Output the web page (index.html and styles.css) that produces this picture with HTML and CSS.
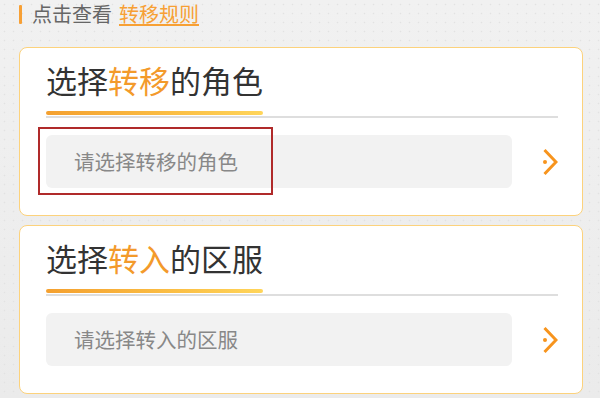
FILE: index.html
```html
<!DOCTYPE html>
<html lang="zh-CN">
<head>
<meta charset="utf-8">
<title>转移</title>
<link rel="stylesheet" href="styles.css">
</head>
<body>
<div class="page">
  <div class="notice">
    <span class="notice-bar"></span>
    <span class="notice-text">点击查看</span>
    <a class="notice-link" href="#">转移规则</a>
  </div>

  <section class="card">
    <div class="card-head">
      <h2 class="card-title">选择<span class="hl">转移</span>的角色</h2>
      <div class="card-bar"></div>
    </div>
    <div class="select-row">
      <div class="select-box">
        <span class="placeholder">请选择转移的角色</span>
        <span class="annot"></span>
      </div>
      <svg class="chev" viewBox="0 0 16 28" width="16" height="28" aria-hidden="true">
        <polyline points="2.5,2 14,14 2.5,26" fill="none" stroke="#f7941d" stroke-width="3" stroke-linejoin="miter"/>
        <circle cx="3" cy="14" r="2" fill="#f7941d"/>
      </svg>
    </div>
  </section>

  <section class="card">
    <div class="card-head">
      <h2 class="card-title">选择<span class="hl">转入</span>的区服</h2>
      <div class="card-bar"></div>
    </div>
    <div class="select-row">
      <div class="select-box">
        <span class="placeholder">请选择转入的区服</span>
      </div>
      <svg class="chev" viewBox="0 0 16 28" width="16" height="28" aria-hidden="true">
        <polyline points="2.5,2 14,14 2.5,26" fill="none" stroke="#f7941d" stroke-width="3" stroke-linejoin="miter"/>
        <circle cx="3" cy="14" r="2" fill="#f7941d"/>
      </svg>
    </div>
  </section>
</div>
</body>
</html>
```

FILE: styles.css
```css
* { box-sizing: border-box; }
html, body { margin: 0; padding: 0; }
body {
  width: 600px;
  height: 398px;
  overflow: hidden;
  font-family: "Noto Sans CJK SC", "Noto Sans", sans-serif;
  background-color: #eeeeee;
  background-image:
    radial-gradient(circle, #e2e2e2 0.7px, transparent 1.1px),
    linear-gradient(180deg, #f1f1f1 0%, #ebebeb 100%);
  background-size: 9px 9px, 100% 100%;
}
.page {
  padding: 1px 17px 0 19px;
  display: flex;
  flex-direction: column;
}
.notice {
  display: flex;
  align-items: center;
  height: 26px;
  font-size: 20px;
  line-height: 26px;
  margin-bottom: 20px;
}
.notice-bar {
  width: 3px;
  height: 19px;
  background: #f7a035;
  border-radius: 1px;
  margin-right: 10px;
}
.notice-text { color: #666; margin-right: 7px; }
.notice-link {
  color: #f7a035;
  text-decoration: underline;
  text-underline-offset: 2px;
  text-decoration-thickness: 1.5px;
}
.card {
  background: #fff;
  border: 1.5px solid #fcd27c;
  border-radius: 8px;
  height: 169px;
  padding: 14px 24px 0 26px;
  margin-bottom: 9px;
}
.card-head {
  border-bottom: 2px solid #dedede;
  display: flex;
  flex-direction: column;
}
.card-title {
  margin: 0;
  font-size: 31px;
  font-weight: 400;
  line-height: 36px;
  color: #333;
}
.hl { color: #f39a2b; }
.card-bar {
  width: 217px;
  height: 4px;
  margin-top: 13px;
  margin-bottom: 1px;
  border-radius: 2px;
  background: linear-gradient(90deg, #f4a02f 0%, #fbbf45 60%, #ffd55a 100%);
}
.select-row {
  display: flex;
  align-items: center;
  gap: 30px;
  margin-top: 17px;
}
.select-box {
  position: relative;
  flex: 1;
  height: 53px;
  background: #f2f2f2;
  border-radius: 6px;
  display: flex;
  align-items: center;
  padding-left: 28px;
}
.placeholder {
  font-size: 20.5px;
  color: #888;
  line-height: 1;
}
.annot {
  position: absolute;
  left: -8px;
  top: -8px;
  width: 235px;
  height: 68px;
  border: 2px solid #b02a2a;
}
.chev { flex: none; display: block; }
```
